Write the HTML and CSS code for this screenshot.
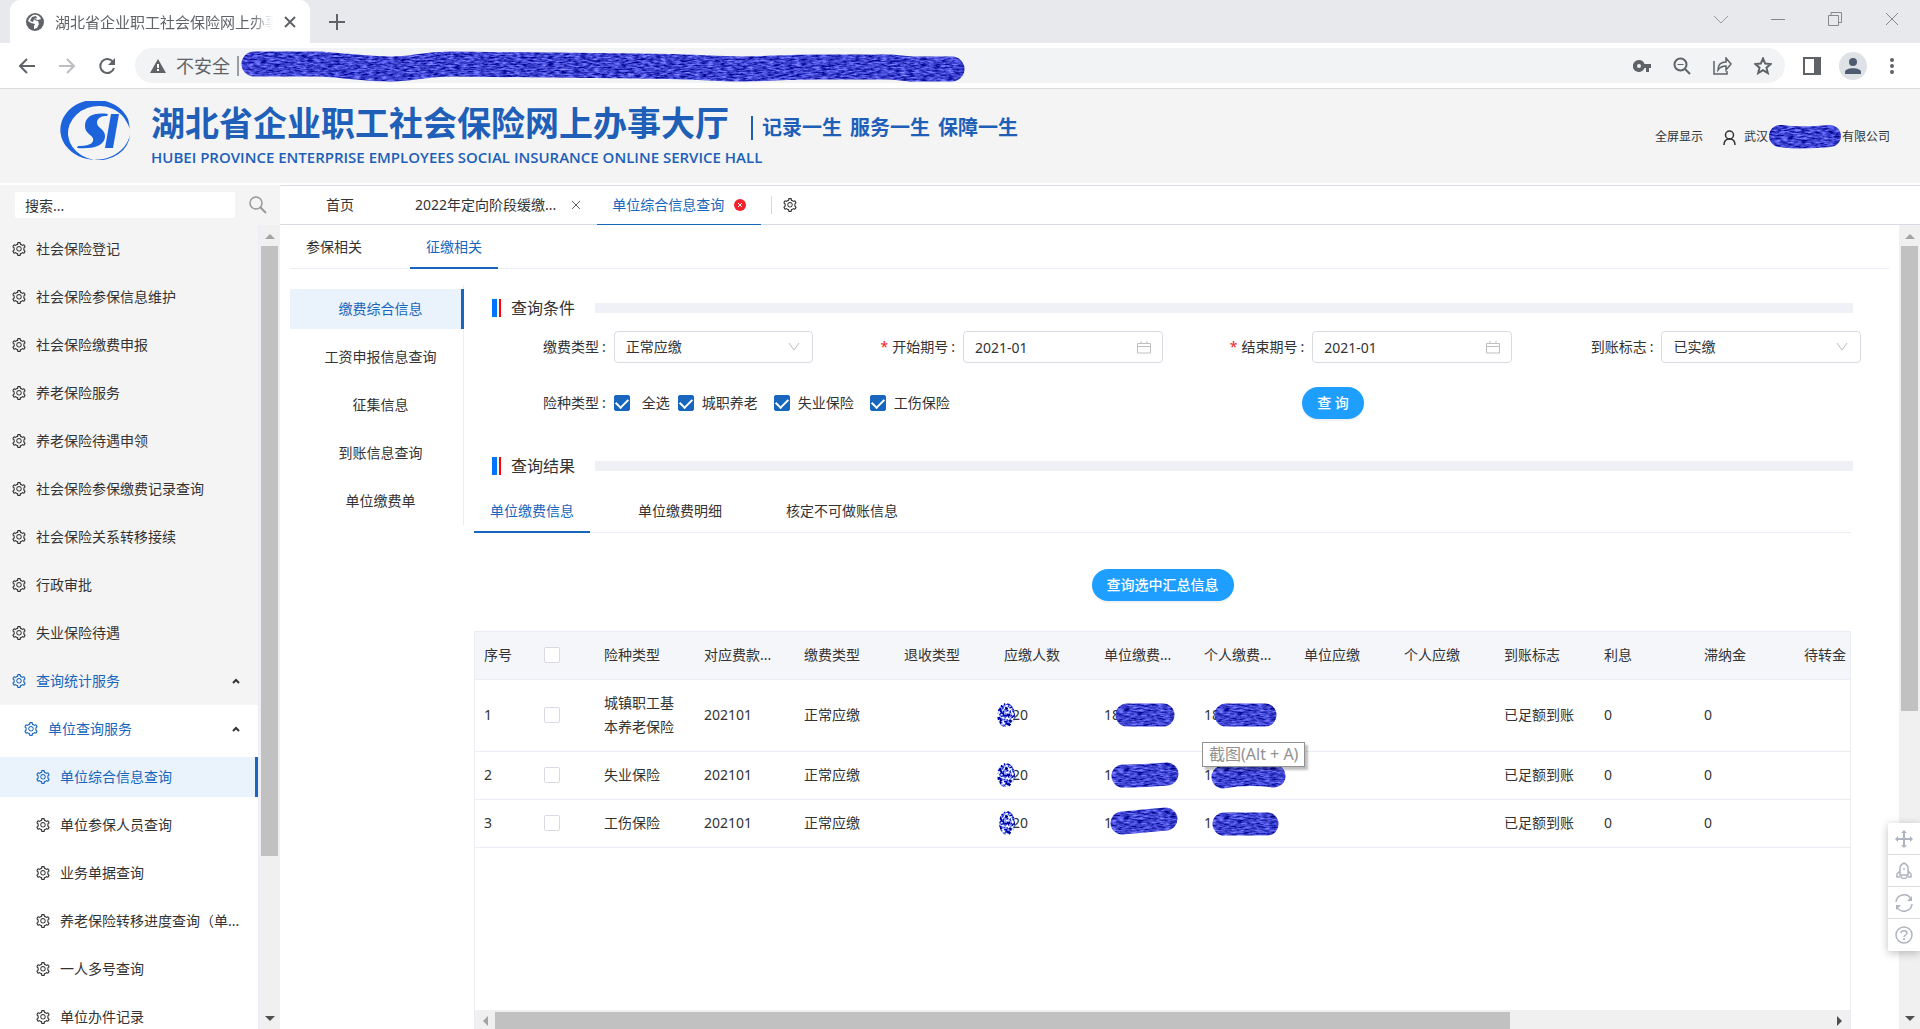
FILE: index.html
```html
<!DOCTYPE html>
<html lang="zh-CN">
<head>
    <meta charset="UTF-8">
    <meta name="viewport" content="width=device-width, initial-scale=1.0">
    <title>湖北省企业职工社会保险网上办事大厅</title>
    <link rel="stylesheet" href="styles.css">
</head>
<body>
    <!-- shared icons and filters -->
    <svg class="defs" aria-hidden="true">
        <symbol id="gear" viewBox="64 64 896 896"><path fill="currentColor" d="M924.8 625.7l-65.5-56c3.1-19 4.7-38.4 4.7-57.8s-1.6-38.8-4.7-57.8l65.5-56a32.03 32.03 0 0 0 9.3-35.2l-.9-2.6a443.74 443.74 0 0 0-79.7-137.9l-1.8-2.1a32.12 32.12 0 0 0-35.1-9.5l-81.3 28.9c-30-24.6-63.5-44-99.7-57.6l-15.7-85a32.05 32.05 0 0 0-25.8-25.7l-2.7-.5c-52.1-9.4-106.9-9.4-159 0l-2.7.5a32.05 32.05 0 0 0-25.8 25.7l-15.8 85.4a351.86 351.86 0 0 0-99 57.4l-81.9-29.1a32 32 0 0 0-35.1 9.5l-1.8 2.1a446.02 446.02 0 0 0-79.7 137.9l-.9 2.6c-4.5 12.5-.8 26.5 9.3 35.2l66.3 56.6c-3.1 18.8-4.6 38-4.6 57.1 0 19.2 1.5 38.4 4.6 57.1L99 625.5a32.03 32.03 0 0 0-9.3 35.2l.9 2.6c18.1 50.4 44.9 96.9 79.7 137.9l1.8 2.1a32.12 32.12 0 0 0 35.1 9.5l81.9-29.1c29.8 24.5 63.1 43.9 99 57.4l15.8 85.4a32.05 32.05 0 0 0 25.8 25.7l2.7.5a449.4 449.4 0 0 0 159 0l2.7-.5a32.05 32.05 0 0 0 25.8-25.7l15.7-85a350 350 0 0 0 99.7-57.6l81.3 28.9a32 32 0 0 0 35.1-9.5l1.8-2.1c34.8-41.1 61.6-87.5 79.7-137.9l.9-2.6c4.5-12.3.8-26.3-9.3-35zM788.3 465.9c2.5 15.1 3.8 30.6 3.8 46.1s-1.3 31-3.8 46.1l-6.6 40.1 74.7 63.9a370.03 370.03 0 0 1-42.6 73.6L721 702.8l-31.4 25.8c-23.9 19.6-50.5 35-79.3 45.8l-38.1 14.3-17.9 97a377.5 377.5 0 0 1-85 0l-17.9-97.2-37.8-14.5c-28.5-10.8-55-26.2-78.7-45.7l-31.4-25.9-93.4 33.2c-17-22.9-31.2-47.6-42.6-73.6l75.5-64.5-6.5-40c-2.4-14.9-3.7-30.3-3.7-45.5 0-15.3 1.2-30.6 3.7-45.5l6.5-40-75.5-64.5c11.3-26.1 25.6-50.7 42.6-73.6l93.4 33.2 31.4-25.9c23.7-19.5 50.2-34.9 78.7-45.7l37.9-14.3 17.9-97.2c28.1-3.2 56.8-3.2 85 0l17.9 97 38.1 14.3c28.7 10.8 55.4 26.2 79.3 45.8l31.4 25.8 92.8-32.9c17 22.9 31.2 47.6 42.6 73.6L781.8 426l6.5 39.9zM512 326c-97.2 0-176 78.8-176 176s78.8 176 176 176 176-78.8 176-176-78.8-176-176-176zm79.2 255.2A111.6 111.6 0 0 1 512 614c-29.9 0-58-11.7-79.2-32.8A111.6 111.6 0 0 1 400 502c0-29.9 11.7-58 32.8-79.2C454 401.6 482.1 390 512 390c29.9 0 58 11.6 79.2 32.8A111.6 111.6 0 0 1 624 502c0 29.9-11.7 58-32.8 79.2z"/></symbol>
        <symbol id="up" viewBox="0 0 8 6"><path d="M1 5l3-3 3 3" fill="none" stroke="#333" stroke-width="2"/></symbol>
        <symbol id="calendar" viewBox="0 0 14 14"><path d="M.5 3.500h13v9.500h-13zM.5 6.500h13M4 1v3M10 1v3" fill="none" stroke="#bfbfbf"/></symbol>
        <filter id="marker" x="0" y="0" width="800" height="40" filterUnits="userSpaceOnUse" color-interpolation-filters="sRGB">
            <feTurbulence type="fractalNoise" baseFrequency="0.15 0.6" numOctaves="3" seed="4"/>
            <feColorMatrix values="0.9 0 0 0 -0.21  0.9 0 0 0 -0.19  0.9 0 0 0 0.36  0 0 0 0 1"/>
            <feComposite in2="SourceGraphic" operator="in"/>
        </filter>
        <filter id="dab" x="-10%" y="-10%" width="120%" height="120%" color-interpolation-filters="sRGB">
            <feTurbulence type="fractalNoise" baseFrequency="0.35" numOctaves="2" seed="7"/>
            <feColorMatrix values="4 0 0 0 -1.6  4 0 0 0 -1.55  2 0 0 0 -0.1  0 0 0 0 1"/>
            <feComposite in2="SourceGraphic" operator="in"/>
        </filter>
    </svg>

    <div class="tabstrip">
        <div class="browser-tab">
            <svg width="18" height="18" viewBox="0 0 18 18"><circle cx="9" cy="9" r="9" fill="#5f6368"/><path d="M7 2c4-1 7 1 8 4l-3 1-3-1-1 1 4 1 1 3-2 4-3 1v-3l1-2-4-1-3-2C3 5 5 3 7 2z" fill="#fff"/><path d="M6 4l4-1 1 2-3 1-1 3-3-1z" fill="#5f6368"/></svg>
            <span class="browser-tab-title">湖北省企业职工社会保险网上办事大厅</span>
            <button class="plain" aria-label="关闭标签页"><svg width="12" height="12" viewBox="0 0 12 12"><path d="M1 1l10 10M11 1L1 11" stroke="#5f6368" stroke-width="2"/></svg></button>
        </div>
        <button class="plain new-tab" aria-label="新标签页"><svg width="16" height="16" viewBox="0 0 16 16"><path d="M8 0v16M0 8h16" stroke="#5f6368" stroke-width="2"/></svg></button>
        <div class="window-buttons">
            <button class="plain" aria-label="搜索标签页"><svg width="14" height="14" viewBox="0 0 14 14"><path d="M0 4l7 7 7-7" fill="none" stroke="#999"/></svg></button>
            <button class="plain" aria-label="最小化"><svg width="14" height="14" viewBox="0 0 14 14"><path d="M0 7.500h14" stroke="#888"/></svg></button>
            <button class="plain" aria-label="还原"><svg width="14" height="14" viewBox="0 0 14 14"><path d="M.5 3.500h10v10H.5zM3 3V.5h10.500v10H11" fill="none" stroke="#888"/></svg></button>
            <button class="plain" aria-label="关闭"><svg width="14" height="14" viewBox="0 0 14 14"><path d="M1 1l12 12M13 1L1 13" stroke="#888"/></svg></button>
        </div>
    </div>

    <div class="toolbar">
        <button class="plain" aria-label="后退"><svg width="18" height="18" viewBox="0 0 18 18"><path d="M17 9H2M9 2L2 9l7 7" fill="none" stroke="#5f6368" stroke-width="2"/></svg></button>
        <button class="plain" aria-label="前进"><svg width="18" height="18" viewBox="0 0 18 18"><path d="M1 9h15M9 2l7 7-7 7" fill="none" stroke="#bcbec1" stroke-width="2"/></svg></button>
        <button class="plain" aria-label="重新加载"><svg width="18" height="18" viewBox="0 0 18 18"><path d="M15 5a7 7 0 1 0 1 6" fill="none" stroke="#5f6368" stroke-width="2"/><path d="M17 1v7h-7z" fill="#5f6368"/></svg></button>
        <div class="omnibox">
            <svg width="16" height="14" viewBox="0 0 16 14"><path d="M8 0l8 14H0z" fill="#5f6368"/><path d="M8 5v4M8 10v2" stroke="#fff" stroke-width="2"/></svg>
            <span class="insecure">不安全</span>
            <i class="omnibox-line"></i>
            <svg class="url-marker" width="724" height="34" viewBox="0 0 724 34"><path filter="url(#marker)" d="M13 15H75C105 16 120 20 150 20 175 20 180 15 210 15L395 17C450 17 470 20 500 20 530 20 540 18 580 18H650L670 20H711" fill="none" stroke="#3b40cf" stroke-width="25" stroke-linecap="round"/></svg>
            <div class="omnibox-icons">
                <svg width="18" height="12" viewBox="0 0 18 12"><path fill-rule="evenodd" d="M6 0a6 6 0 1 0 5.500 8H13v4h3V8h2V4h-6.500A6 6 0 0 0 6 0zm0 4a2 2 0 1 1 0 4 2 2 0 0 1 0-4z" fill="#5f6368"/></svg>
                <svg width="18" height="18" viewBox="0 0 18 18"><circle cx="7.500" cy="7.500" r="6" fill="none" stroke="#5f6368" stroke-width="2"/><path d="M4.500 7.500h6" stroke="#5f6368"/><path d="M12 12l5 5" stroke="#5f6368" stroke-width="2"/></svg>
                <svg width="19" height="18" viewBox="0 0 19 18"><path d="M1 4v13h13v-3M5 13c0-5 3-8 8-8V1l5 6-5 6V9c-4 0-6 1-8 4z" fill="none" stroke="#5f6368" stroke-width="1.500"/></svg>
                <svg width="18" height="18" viewBox="0 0 18 18"><path d="M9 1.500l2.200 5.100 5.500.5-4.200 3.600 1.300 5.400L9 13.200l-4.800 2.900 1.300-5.400L1.300 7.100l5.500-.5z" fill="none" stroke="#5f6368" stroke-width="2"/></svg>
            </div>
        </div>
        <button class="plain" aria-label="侧边栏"><svg width="18" height="18" viewBox="0 0 18 18"><path fill-rule="evenodd" d="M0 0h18v18H0zM2 2v14h9V2z" fill="#5f6368"/></svg></button>
        <button class="plain avatar" aria-label="个人资料"><svg width="16" height="16" viewBox="0 0 16 16"><circle cx="8" cy="4" r="4" fill="#4f5b70"/><path d="M0 16v-2c0-5 16-5 16 0v2z" fill="#4f5b70"/></svg></button>
        <button class="plain" aria-label="菜单"><svg width="4" height="18" viewBox="0 0 4 18"><circle cx="2" cy="3" r="2" fill="#5f6368"/><circle cx="2" cy="9" r="2" fill="#5f6368"/><circle cx="2" cy="15" r="2" fill="#5f6368"/></svg></button>
    </div>

    <header class="header">
        <svg class="logo" width="70" height="60" viewBox="0 0 70 60">
            <path d="M68 18A35 30 0 1 0 70 33 31 27 0 1 1 53 8c8 4 12 8 17 20C69 24 69 21 68 18z" fill="#1c63dc"/>
            <path d="M48 13c-14-2-23 2-23 12 0 9 10 9 8 15-1 4-8 5-15 5l-1 2c14 1 27-1 28-11 1-8-9-9-8-15 1-5 5-6 10-6zM51 13h8l-6 34h-8z" fill="#1c63dc"/>
        </svg>
        <div class="brand">
            <div class="brand-top">
                <h1>湖北省企业职工社会保险网上办事大厅</h1>
                <div class="slogan"><span>记录一生</span><span>服务一生</span><span>保障一生</span></div>
            </div>
            <p>HUBEI PROVINCE ENTERPRISE EMPLOYEES SOCIAL INSURANCE ONLINE SERVICE HALL</p>
        </div>
        <div class="user">
            <a href="#">全屏显示</a>
            <svg width="13" height="15" viewBox="0 0 13 15"><circle cx="6.500" cy="5" r="4" fill="none" stroke="#333" stroke-width="1.500"/><path d="M1 15c0-4 2-6 5.500-6S12 11 12 15" fill="none" stroke="#333" stroke-width="1.500"/></svg>
            <a href="#" class="company">武汉<svg width="74" height="24" viewBox="0 0 74 24"><path filter="url(#marker)" d="M12 11c15 2 30 2 50 0" fill="none" stroke="#3b40cf" stroke-width="22" stroke-linecap="round"/></svg>有限公司</a>
        </div>
    </header>

    <div class="layout">
        <aside class="sidebar">
            <div class="search">
                <input type="text" aria-label="搜索" placeholder="搜索...">
                <button class="plain" aria-label="搜索"><svg width="18" height="18" viewBox="0 0 18 18"><circle cx="7" cy="7" r="6" fill="none" stroke="#999" stroke-width="1.500"/><path d="M11 11l6 6" stroke="#999" stroke-width="2"/></svg></button>
            </div>
            <div class="menu-wrap">
                <nav class="menu">
                    <a href="#"><svg><use href="#gear"/></svg>社会保险登记</a>
                    <a href="#"><svg><use href="#gear"/></svg>社会保险参保信息维护</a>
                    <a href="#"><svg><use href="#gear"/></svg>社会保险缴费申报</a>
                    <a href="#"><svg><use href="#gear"/></svg>养老保险服务</a>
                    <a href="#"><svg><use href="#gear"/></svg>养老保险待遇申领</a>
                    <a href="#"><svg><use href="#gear"/></svg>社会保险参保缴费记录查询</a>
                    <a href="#"><svg><use href="#gear"/></svg>社会保险关系转移接续</a>
                    <a href="#"><svg><use href="#gear"/></svg>行政审批</a>
                    <a href="#"><svg><use href="#gear"/></svg>失业保险待遇</a>
                    <a href="#" class="open"><svg><use href="#gear"/></svg>查询统计服务<svg class="arrow"><use href="#up"/></svg></a>
                    <div class="submenu">
                        <a href="#" class="level2 open"><svg><use href="#gear"/></svg>单位查询服务<svg class="arrow"><use href="#up"/></svg></a>
                        <a href="#" class="level3 selected"><svg><use href="#gear"/></svg>单位综合信息查询</a>
                        <a href="#" class="level3"><svg><use href="#gear"/></svg>单位参保人员查询</a>
                        <a href="#" class="level3"><svg><use href="#gear"/></svg>业务单据查询</a>
                        <a href="#" class="level3"><svg><use href="#gear"/></svg>养老保险转移进度查询（单...</a>
                        <a href="#" class="level3"><svg><use href="#gear"/></svg>一人多号查询</a>
                        <a href="#" class="level3"><svg><use href="#gear"/></svg>单位办件记录</a>
                    </div>
                </nav>
                <div class="scrollbar">
                    <i class="tri-up"></i>
                    <div class="track"><div class="thumb menu-thumb"></div></div>
                    <i class="tri-down"></i>
                </div>
            </div>
        </aside>

        <main class="main">
            <div class="page-tabs">
                <a href="#" class="home">首页</a>
                <a href="#">2022年定向阶段缓缴...<svg class="tab-x" viewBox="0 0 8 8"><path d="M0 0l8 8M8 0L0 8" stroke="#666"/></svg></a>
                <a href="#" class="active">单位综合信息查询<svg class="tab-close" viewBox="0 0 12 12"><circle cx="6" cy="6" r="6" fill="#f5222d"/><path d="M4 4l4 4M8 4L4 8" stroke="#fff"/></svg></a>
                <button class="plain tab-setting" aria-label="设置"><svg><use href="#gear"/></svg></button>
            </div>

            <div class="page-wrap">
                <div class="page">
                    <div class="tabs">
                        <a href="#">参保相关</a>
                        <a href="#" class="active">征缴相关</a>
                    </div>
                    <div class="columns">
                        <nav class="side-nav">
                            <a href="#" class="selected">缴费综合信息</a>
                            <a href="#">工资申报信息查询</a>
                            <a href="#">征集信息</a>
                            <a href="#">到账信息查询</a>
                            <a href="#">单位缴费单</a>
                        </nav>
                        <section class="content">
                            <h2>查询条件</h2>
                            <form class="query-form">
                                <div class="field">
                                    <label for="fee-type">缴费类型</label>
                                    <div class="control">
                                        <select id="fee-type"><option>正常应缴</option></select>
                                        <svg viewBox="0 0 14 14"><path d="M2 3l5 7 5-7" fill="none" stroke="#bfbfbf"/></svg>
                                    </div>
                                </div>
                                <div class="field">
                                    <label for="start" class="required">开始期号</label>
                                    <div class="control">
                                        <input type="text" id="start" value="2021-01">
                                        <svg><use href="#calendar"/></svg>
                                    </div>
                                </div>
                                <div class="field">
                                    <label for="end" class="required">结束期号</label>
                                    <div class="control">
                                        <input type="text" id="end" value="2021-01">
                                        <svg><use href="#calendar"/></svg>
                                    </div>
                                </div>
                                <div class="field">
                                    <label for="paid">到账标志</label>
                                    <div class="control">
                                        <select id="paid"><option>已实缴</option></select>
                                        <svg viewBox="0 0 14 14"><path d="M2 3l5 7 5-7" fill="none" stroke="#bfbfbf"/></svg>
                                    </div>
                                </div>
                                <div class="field wide">
                                    <span class="label">险种类型</span>
                                    <div class="checks">
                                        <label class="all"><input type="checkbox" checked>全选</label>
                                        <label><input type="checkbox" checked>城职养老</label>
                                        <label><input type="checkbox" checked>失业保险</label>
                                        <label><input type="checkbox" checked>工伤保险</label>
                                    </div>
                                </div>
                                <div class="actions"><button type="button" class="btn">查 询</button></div>
                            </form>

                            <h2>查询结果</h2>
                            <div class="result">
                                <div class="tabs result-tabs">
                                    <a href="#" class="active">单位缴费信息</a>
                                    <a href="#">单位缴费明细</a>
                                    <a href="#">核定不可做账信息</a>
                                </div>
                                <div class="summary"><button type="button" class="btn">查询选中汇总信息</button></div>
                                <div class="table-box">
                                    <div class="table-view">
                                        <table>
                                            <colgroup><col class="narrow"><col class="narrow"></colgroup>
                                            <thead>
                                                <tr>
                                                    <th>序号</th>
                                                    <th><input type="checkbox" aria-label="全选"></th>
                                                    <th>险种类型</th>
                                                    <th>对应费款...</th>
                                                    <th>缴费类型</th>
                                                    <th>退收类型</th>
                                                    <th>应缴人数</th>
                                                    <th>单位缴费...</th>
                                                    <th>个人缴费...</th>
                                                    <th>单位应缴</th>
                                                    <th>个人应缴</th>
                                                    <th>到账标志</th>
                                                    <th>利息</th>
                                                    <th>滞纳金</th>
                                                    <th>待转金</th>
                                                </tr>
                                            </thead>
                                            <tbody>
                                                <tr>
                                                    <td>1</td>
                                                    <td><input type="checkbox" aria-label="选择1"></td>
                                                    <td>城镇职工基本养老保险</td>
                                                    <td>202101</td>
                                                    <td>正常应缴</td>
                                                    <td></td>
                                                    <td class="count">20<svg class="dab" viewBox="0 0 18 24"><ellipse cx="9" cy="12" rx="9" ry="12" filter="url(#dab)"/></svg></td>
                                                    <td class="amount">18<svg class="mark" viewBox="0 0 90 36"><path filter="url(#marker)" d="M23 18h36" stroke="#3b40cf" stroke-width="23" stroke-linecap="round"/></svg></td>
                                                    <td class="amount">18<svg class="mark" viewBox="0 0 90 36"><path filter="url(#marker)" d="M22 18h39" stroke="#3b40cf" stroke-width="23" stroke-linecap="round"/></svg></td>
                                                    <td></td>
                                                    <td></td>
                                                    <td>已足额到账</td>
                                                    <td>0</td>
                                                    <td>0</td>
                                                    <td></td>
                                                </tr>
                                                <tr>
                                                    <td>2</td>
                                                    <td><input type="checkbox" aria-label="选择2"></td>
                                                    <td>失业保险</td>
                                                    <td>202101</td>
                                                    <td>正常应缴</td>
                                                    <td></td>
                                                    <td class="count">20<svg class="dab" viewBox="0 0 18 24"><ellipse cx="9" cy="12" rx="9" ry="12" filter="url(#dab)"/></svg></td>
                                                    <td class="amount">1<svg class="mark" viewBox="0 0 90 36"><path filter="url(#marker)" d="M19 19c15 0 28-1 44-2" fill="none" stroke="#3b40cf" stroke-width="23" stroke-linecap="round"/></svg></td>
                                                    <td class="amount">1<svg class="mark" viewBox="0 0 90 36"><path filter="url(#marker)" d="M19 20c16-3 34-3 51-1" fill="none" stroke="#3b40cf" stroke-width="23" stroke-linecap="round"/></svg></td>
                                                    <td></td>
                                                    <td></td>
                                                    <td>已足额到账</td>
                                                    <td>0</td>
                                                    <td>0</td>
                                                    <td></td>
                                                </tr>
                                                <tr>
                                                    <td>3</td>
                                                    <td><input type="checkbox" aria-label="选择3"></td>
                                                    <td>工伤保险</td>
                                                    <td>202101</td>
                                                    <td>正常应缴</td>
                                                    <td></td>
                                                    <td class="count">20<svg class="dab" viewBox="0 0 18 24"><ellipse cx="10" cy="12" rx="8" ry="12" filter="url(#dab)"/></svg></td>
                                                    <td class="amount">1<svg class="mark" viewBox="0 0 90 36"><path filter="url(#marker)" d="M18 18l44-4" fill="none" stroke="#3b40cf" stroke-width="23" stroke-linecap="round"/></svg></td>
                                                    <td class="amount">1<svg class="mark" viewBox="0 0 90 36"><path filter="url(#marker)" d="M20 19h43" fill="none" stroke="#3b40cf" stroke-width="23" stroke-linecap="round"/></svg></td>
                                                    <td></td>
                                                    <td></td>
                                                    <td>已足额到账</td>
                                                    <td>0</td>
                                                    <td>0</td>
                                                    <td></td>
                                                </tr>
                                            </tbody>
                                        </table>
                                        <div class="tooltip">截图(Alt + A)</div>
                                    </div>
                                    <div class="scrollbar horizontal">
                                        <i class="tri-left"></i>
                                        <div class="track"><div class="thumb table-thumb"></div></div>
                                        <i class="tri-right"></i>
                                    </div>
                                </div>
                            </div>
                        </section>
                    </div>
                </div>
                <div class="scrollbar">
                    <i class="tri-up"></i>
                    <div class="track"><div class="thumb page-thumb"></div></div>
                    <i class="tri-down"></i>
                </div>
            </div>
        </main>
    </div>

    <div class="float-tools">
        <button aria-label="移动"><svg viewBox="0 0 18 18"><path d="M9 2v14M2 9h14" stroke="#aeb5c0" stroke-width="2"/><path d="M9 0l3 3H6zM9 18l3-3H6zM0 9l3-3v6zM18 9l-3-3v6z" fill="#aeb5c0"/></svg></button>
        <button aria-label="火箭"><svg viewBox="0 0 18 18"><path d="M5 13V6c0-2 2-4 4-5 2 1 4 3 4 5v7zM5 9l-3 3v3h3M13 9l3 3v3h-3M6 13v2c1 2 5 2 6 0v-2" fill="none" stroke="#aeb5c0" stroke-width="1.500"/><circle cx="9" cy="7" r="1" fill="#aeb5c0"/></svg></button>
        <button aria-label="刷新"><svg viewBox="0 0 18 18"><path d="M1 8a8 8 0 0 1 15-3M17 10a8 8 0 0 1-15 3" fill="none" stroke="#aeb5c0" stroke-width="1.500"/><path d="M17 2v5h-5zM1 16v-5h5z" fill="#aeb5c0"/></svg></button>
        <button aria-label="帮助"><svg viewBox="0 0 18 18"><circle cx="9" cy="9" r="8" fill="none" stroke="#aeb5c0" stroke-width="1.500"/><path d="M6 7c0-3 6-3 6 0 0 2-3 2-3 4M9 12v2" fill="none" stroke="#aeb5c0" stroke-width="1.500"/></svg></button>
    </div>
</body>
</html>
```
FILE: styles.css
```css
* {
    box-sizing: border-box;
}

body {
    font-family: "Noto Sans", "Noto Sans CJK SC", sans-serif;
    font-size: 14px;
    line-height: 24px;
    color: #333;
    margin: 0;
    display: flex;
    flex-direction: column;
    height: 100vh;
    overflow: hidden;
    background-color: #fff;
}

a {
    color: inherit;
    text-decoration: none;
}

svg {
    display: block;
    flex: none;
}

.defs {
    position: absolute;
    width: 0;
    height: 0;
}

input, select, button {
    font: inherit;
    color: inherit;
}

.plain {
    display: flex;
    align-items: center;
    justify-content: center;
    padding: 0;
    border: none;
    background: none;
}

/* browser frame */
.tabstrip {
    display: flex;
    flex: none;
    height: 43px;
    background-color: #e8e9ed;
}

.browser-tab {
    display: flex;
    align-items: center;
    gap: 11px;
    width: 300px;
    margin-left: 10px;
    padding: 0 14px 0 16px;
    border-radius: 10px 10px 0 0;
    background-color: #fff;
    color: #5f6368;
}

.browser-tab-title {
    flex: 1;
    font-size: 15px;
    white-space: nowrap;
    overflow: hidden;
    mask-image: linear-gradient(to right, #000 90%, transparent);
}

.new-tab {
    width: 54px;
}

.window-buttons {
    display: flex;
    margin-left: auto;
}

.window-buttons button {
    width: 57px;
    height: 37px;
}

.toolbar {
    display: flex;
    align-items: center;
    flex: none;
    gap: 22px;
    height: 46px;
    padding: 0 26px 0 18px;
    border-bottom: 1px solid #d9dbdf;
}

.omnibox {
    display: flex;
    align-items: center;
    flex: 1;
    gap: 10px;
    height: 35px;
    margin: 0 -4px 0 -3px;
    padding: 0 13px 0 15px;
    border-radius: 18px;
    background-color: #f1f3f4;
}

.insecure {
    font-size: 18px;
    color: #5f6368;
}

.omnibox-line {
    width: 2px;
    height: 20px;
    margin-left: -3px;
    background-color: #9a9da1;
}

.url-marker {
    margin-left: -8px;
}

.omnibox-icons {
    display: flex;
    align-items: center;
    gap: 22px;
    margin-left: auto;
}

.avatar {
    width: 28px;
    height: 28px;
    margin: 0 1px 0 -4px;
    border-radius: 50%;
    background-color: #dee1e6;
}

/* page header */
.header {
    display: flex;
    align-items: flex-start;
    flex: none;
    height: 94px;
    padding: 12px 30px 0 60px;
    background-color: #f4f4f4;
}

.brand {
    margin-left: 21px;
    color: #205fb8;
    font-weight: bold;
}

.brand-top {
    display: flex;
    align-items: center;
    gap: 22px;
    height: 44px;
}

.brand h1 {
    margin: 0;
    font-size: 34px;
    line-height: 44px;
}

.brand p {
    margin: 0;
    font-family: "Open Sans", "Noto Sans", sans-serif;
    font-size: 15px;
    line-height: 24px;
    font-weight: 600;
}

.slogan {
    display: flex;
    gap: 8px;
    margin-top: 10px;
    padding-left: 9px;
    border-left: 2px solid #205fb8;
    font-size: 20px;
}

.user {
    display: flex;
    align-items: center;
    margin: 24px 0 0 auto;
    font-size: 12px;
}

.user > svg {
    margin: 0 8px 0 20px;
}

.company {
    display: flex;
    align-items: center;
}

/* layout */
.layout {
    display: flex;
    flex: 1;
    min-height: 0;
    padding-top: 2px;
}

.sidebar {
    display: flex;
    flex-direction: column;
    width: 280px;
    background-color: #f4f4f4;
}

.search {
    display: flex;
    align-items: center;
    flex: none;
    gap: 14px;
    height: 40px;
    padding: 0 15px;
}

.search input {
    width: 220px;
    height: 26px;
    padding: 0 10px;
    border: none;
    border-radius: 2px;
    background-color: #fff;
}

.search input::placeholder {
    color: #333;
}

.menu-wrap {
    display: flex;
    flex: 1;
    min-height: 0;
}

.menu {
    flex: 1;
    min-width: 0;
    overflow: hidden;
    border-right: 1px solid #ebedf5;
}

.menu a {
    display: flex;
    align-items: center;
    gap: 10px;
    height: 40px;
    margin: 4px 0;
    padding-left: 12px;
    white-space: nowrap;
}

.menu > a {
    margin: 0 0 8px;
}

.menu > a:first-child {
    margin-top: 4px;
}

.menu svg, .tab-setting svg {
    width: 14px;
    height: 14px;
}

.menu .arrow {
    width: 8px;
    height: 6px;
    margin: 0 18px 0 auto;
}

.menu .open {
    color: #1866bd;
}

.menu > .open {
    margin-bottom: 4px;
}

.submenu {
    display: flex;
    flex-direction: column;
    gap: 8px;
    padding: 4px 0;
    background-color: #fff;
}

.submenu a {
    flex: none;
    margin: 0;
}

.menu .level2 {
    padding-left: 24px;
}

.menu .level3 {
    padding-left: 36px;
}

.menu .selected, .side-nav .selected {
    color: #1866bd;
    background-color: #eaf3fb;
    border-right: 3px solid #1866bd;
}

/* scrollbars */
.scrollbar {
    display: flex;
    flex-direction: column;
    align-items: center;
    flex: none;
    width: 21px;
    background-color: #f0f0f0;
}

.scrollbar i {
    flex: none;
    border: 5px solid transparent;
}

.track {
    flex: 1;
    width: 17px;
}

.thumb {
    background-color: #c1c1c1;
}

.menu-thumb {
    height: 80%;
}

.page-thumb {
    height: 61%;
}

.scrollbar .tri-up {
    margin: 4px 0 7px;
    border-bottom-color: #a3a3a3;
}

.scrollbar .tri-down {
    margin: 7px 0 3px;
    border-top-color: #505050;
}

.scrollbar.horizontal {
    flex-direction: row;
    width: auto;
    height: 21px;
}

.horizontal .track {
    width: auto;
    height: 17px;
}

.horizontal .tri-left {
    margin: 0 7px 0 3px;
    border-right-color: #a3a3a3;
}

.horizontal .tri-right {
    margin: 0 3px 0 7px;
    border-left-color: #505050;
}

.table-thumb {
    width: 76%;
    height: 100%;
}

/* opened pages */
.main {
    display: flex;
    flex-direction: column;
    flex: 1;
    min-width: 0;
}

.page-tabs {
    display: flex;
    flex: none;
    height: 40px;
    padding-left: 29px;
    border-top: 1px solid #d9dae4;
    border-bottom: 1px solid #d9dae4;
}

.page-tabs a {
    display: flex;
    align-items: center;
    height: 39px;
    padding: 0 17px;
    border-bottom: 1px solid transparent;
}

.page-tabs .home {
    margin-right: 27px;
}

.page-tabs .active {
    margin-right: 10px;
    padding: 0 15px;
    color: #1866bd;
    border-bottom-color: #1866bd;
}

.tab-x {
    width: 8px;
    height: 8px;
    margin-left: 16px;
}

.tab-close {
    width: 12px;
    height: 12px;
    margin-left: 10px;
}

.tab-setting {
    align-self: center;
    height: 18px;
    padding-left: 11px;
    border-left: 1px solid #d9d9d9;
}

.page-wrap {
    display: flex;
    flex: 1;
    min-height: 0;
}

.page {
    flex: 1;
    min-width: 0;
    padding: 0 10px;
    overflow: hidden;
}

.tabs {
    display: flex;
    gap: 32px;
    height: 44px;
    border-bottom: 1px solid #ebedf5;
}

.tabs a {
    height: 44px;
    padding: 0 16px;
    line-height: 44px;
}

.tabs .active {
    color: #1866bd;
    border-bottom: 2px solid #1866bd;
}

.columns {
    display: flex;
    align-items: flex-start;
    padding-top: 16px;
}

.side-nav {
    display: flex;
    flex-direction: column;
    gap: 8px;
    flex: none;
    width: 174px;
    padding: 4px 0;
    border-right: 1px solid #ebedf5;
}

.side-nav a {
    height: 40px;
    padding-left: 8px;
    line-height: 40px;
    text-align: center;
}

.side-nav .selected {
    margin-right: -1px;
    padding-left: 10px;
}

.content {
    flex: 1;
    min-width: 0;
    padding-right: 28px;
}

/* section title with the blue and red mark */
.content h2 {
    display: flex;
    align-items: center;
    margin: 11px 8px 11px 28px;
    font-size: 16px;
    line-height: 24px;
    font-weight: normal;
}

.content h2::before {
    content: "";
    width: 9px;
    height: 18px;
    margin-right: 10px;
    background: linear-gradient(to right, #0073ff 5px, #fff 5px, #fff 7px, #ff0010 7px);
}

.content h2::after {
    content: "";
    flex: 1;
    height: 10px;
    margin-left: 20px;
    background-color: #f0f1f6;
}

.query-form {
    display: grid;
    grid-template-columns: repeat(4, 1fr);
    row-gap: 24px;
    margin-bottom: 35px;
}

.field {
    display: grid;
    grid-template-columns: 3fr 4fr;
    align-items: center;
    height: 32px;
}

.field.wide {
    grid-column: span 2;
    grid-template-columns: 3fr 11fr;
}

.field > label, .label {
    text-align: right;
}

.field > label::after, .label::after {
    content: ":";
    margin: 0 8px 0 3px;
}

.required::before {
    content: "*";
    margin-right: 4px;
    color: #f5222d;
}

.control {
    position: relative;
}

.control input, .control select {
    display: block;
    width: 100%;
    height: 32px;
    padding: 0 11px;
    appearance: none;
    border: 1px solid #d9dae4;
    border-radius: 4px;
    background-color: #fff;
}

.control svg {
    position: absolute;
    top: 9px;
    right: 12px;
    width: 14px;
    height: 14px;
}

.checks {
    display: flex;
    gap: 16px;
}

.checks label {
    display: flex;
    align-items: center;
    gap: 8px;
    white-space: nowrap;
}

.checks .all {
    gap: 12px;
    margin-right: -8px;
}

input[type="checkbox"] {
    display: flex;
    align-items: center;
    justify-content: center;
    width: 16px;
    height: 16px;
    margin: 0;
    appearance: none;
    border: 1px solid #d9dae4;
    border-radius: 2px;
    background-color: #fff;
}

input[type="checkbox"]:checked {
    border-color: #1866bd;
    background-color: #1866bd;
}

input[type="checkbox"]:checked::after {
    content: "";
    width: 6px;
    height: 10px;
    margin-bottom: 3px;
    border: solid #fff;
    border-width: 0 2px 2px 0;
    transform: rotate(45deg);
}

.btn {
    height: 32px;
    padding: 0 15px;
    border: none;
    border-radius: 16px;
    background-color: #1e9fff;
    box-shadow: 0 2px 0 rgba(0, 0, 0, 0.05);
    color: #fff;
    font-weight: 500;
}

.actions {
    grid-column: span 2;
    padding-left: 20%;
}

.result {
    margin: 0 10px;
}

.result-tabs {
    margin-top: 11px;
}

.summary {
    margin: 36px 0 30px;
    text-align: center;
    line-height: 0;
}

.table-box {
    border: 1px solid #ebedf5;
    border-bottom: none;
}

.table-view {
    position: relative;
    height: 378px;
    overflow: hidden;
}

table {
    width: 1420px;
    table-layout: fixed;
    border-collapse: collapse;
}

col.narrow {
    width: 60px;
}

th, td {
    height: 48px;
    padding: 11px 9px;
    border-bottom: 1px solid #ebedf5;
    text-align: left;
    font-weight: normal;
}

th {
    height: 47px;
    background-color: #f5f6fa;
    white-space: nowrap;
}

tbody tr:first-child td {
    height: 72px;
}

.count, .amount {
    position: relative;
}

.count {
    padding-left: 17px;
}

.dab {
    position: absolute;
    top: calc(50% - 12px);
    left: 2px;
    width: 18px;
    height: 24px;
}

.mark {
    position: absolute;
    top: calc(50% - 18px);
    left: 9px;
    width: 90px;
    height: 36px;
}

/* floats over the rows */
.tooltip {
    position: absolute;
    top: 110px;
    left: 727px;
    padding: 0 6px;
    border: 1px solid #919191;
    background-color: #fff;
    box-shadow: 3px 3px 2px rgba(0, 0, 0, 0.25);
    color: #919191;
    font-size: 16px;
    line-height: 23px;
}

.float-tools {
    position: fixed;
    right: 0;
    bottom: 78px;
    width: 32px;
    border-radius: 2px 0 0 2px;
    background-color: #fff;
    box-shadow: 0 2px 8px rgba(0, 0, 0, 0.25);
}

.float-tools button {
    display: flex;
    align-items: center;
    justify-content: center;
    width: 32px;
    height: 32px;
    padding: 0;
    border: none;
    border-bottom: 1px solid #d9dce3;
    background: none;
}

.float-tools button:last-child {
    border-bottom: none;
}

.float-tools svg {
    width: 18px;
    height: 18px;
}
```
